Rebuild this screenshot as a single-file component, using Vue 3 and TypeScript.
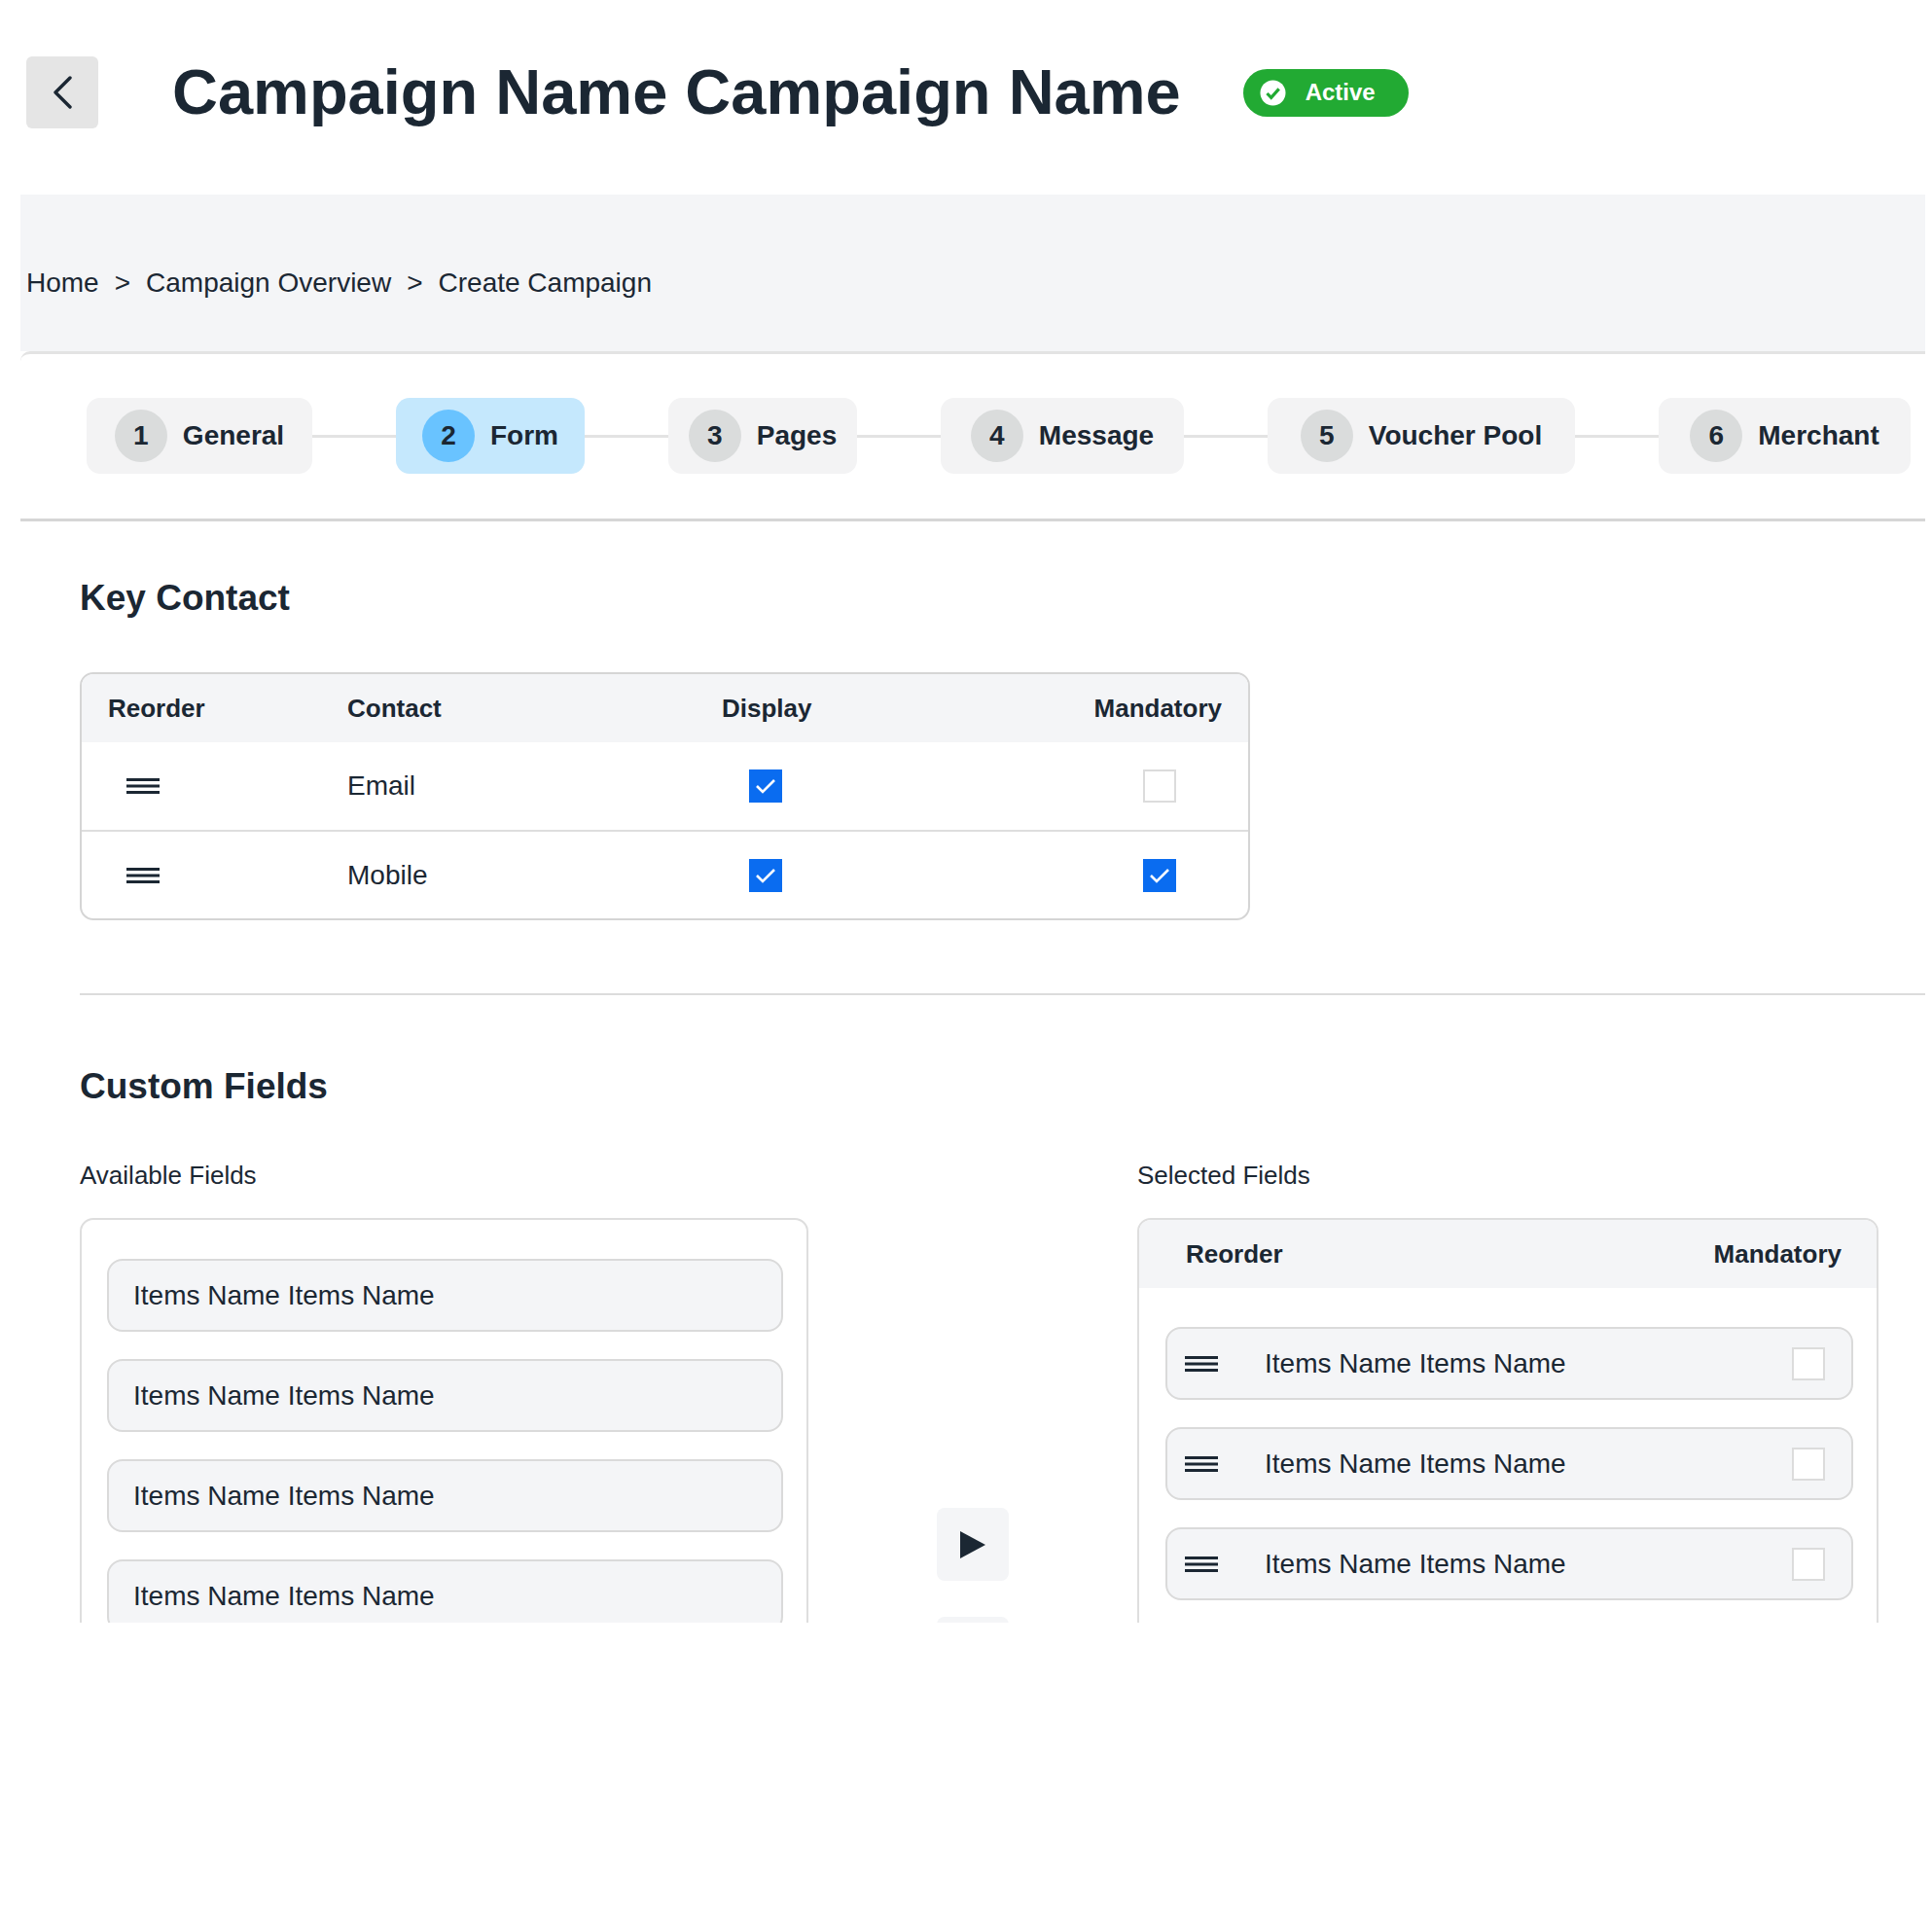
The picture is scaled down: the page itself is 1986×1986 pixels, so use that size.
<template>
  <div class="page">
    <header class="head">
      <button class="back" type="button" aria-label="Back">
        <svg width="20" height="34" viewBox="0 0 20 34" fill="none">
          <path d="M18 2 3 17l15 15" stroke="#1b2733" stroke-width="3.4" stroke-linecap="round" stroke-linejoin="round" />
        </svg>
      </button>
      <h1 class="title">Campaign Name Campaign Name</h1>
      <span class="badge">
        <svg width="27" height="27" viewBox="0 0 27 27">
          <circle cx="13.5" cy="13.5" r="13" fill="#fff" />
          <path d="M7.5 14l4.2 4.4 8-9" fill="none" stroke="#22aa33" stroke-width="3.2" />
        </svg>
        Active
      </span>
    </header>

    <nav class="crumbs">
      <template v-for="(c, i) in crumbs" :key="c">
        <span v-if="i > 0">&gt;</span>
        <span>{{ c }}</span>
      </template>
    </nav>

    <div class="stepper">
      <template v-for="(s, i) in steps" :key="s.label">
        <span v-if="i > 0" class="link"></span>
        <div class="step" :class="{ on: s.label === 'Form' }" :style="{ width: s.width + 'px' }">
          <span class="num">{{ i + 1 }}</span>
          <span>{{ s.label }}</span>
        </div>
      </template>
    </div>

    <main class="content">
      <h2>Key Contact</h2>
      <div class="table">
        <div class="row thead">
          <span>Reorder</span>
          <span>Contact</span>
          <span>Display</span>
          <span class="right">Mandatory</span>
        </div>
        <div v-for="c in contacts" :key="c.name" class="row tbody">
          <svg class="grip" width="34" height="16" viewBox="0 0 34 16"><path d="M0 1.5h34M0 8h34M0 14.5h34" stroke="#1b2733" stroke-width="3" /></svg>
          <span>{{ c.name }}</span>
          <span class="box display" :class="{ checked: c.display }">
            <svg v-if="c.display" width="22" height="16" viewBox="0 0 22 16"><path d="M2 8l6 6L20 2" fill="none" stroke="#fff" stroke-width="2.6" /></svg>
          </span>
          <div class="right">
            <span class="box mand" :class="{ checked: c.mandatory }">
              <svg v-if="c.mandatory" width="22" height="16" viewBox="0 0 22 16"><path d="M2 8l6 6L20 2" fill="none" stroke="#fff" stroke-width="2.6" /></svg>
            </span>
          </div>
        </div>
      </div>

      <hr class="rule" />

      <h2 class="second">Custom Fields</h2>
      <div class="fields">
        <section class="col left">
          <div class="label">Available Fields</div>
          <div class="panel avail">
            <div v-for="n in 4" :key="n" class="item">Items Name Items Name</div>
          </div>
        </section>

        <div class="moves">
          <button class="move" type="button" aria-label="Add">
            <svg width="28" height="28" viewBox="0 0 28 28"><path d="M1 0l26 14L1 28z" fill="#1b2733" /></svg>
          </button>
          <button class="move" type="button" aria-label="Remove">
            <svg width="28" height="28" viewBox="0 0 28 28"><path d="M27 0L1 14l26 14z" fill="#1b2733" /></svg>
          </button>
        </div>

        <section class="col sel">
          <div class="label">Selected Fields</div>
          <div class="panel">
            <div class="sel-head">
              <span>Reorder</span>
              <span>Mandatory</span>
            </div>
            <div class="sel-list">
              <div v-for="n in 3" :key="n" class="item with-grip">
                <svg class="item-grip" width="34" height="16" viewBox="0 0 34 16"><path d="M0 1.5h34M0 8h34M0 14.5h34" stroke="#1b2733" stroke-width="3" /></svg>
                <span class="grow">Items Name Items Name</span>
                <span class="box"></span>
              </div>
            </div>
          </div>
        </section>
      </div>
    </main>
  </div>
</template>

<script setup lang="ts">
const crumbs: string[] = ['Home', 'Campaign Overview', 'Create Campaign'];

const steps = [
  { label: 'General', width: 232 },
  { label: 'Form', width: 194 },
  { label: 'Pages', width: 194 },
  { label: 'Message', width: 250 },
  { label: 'Voucher Pool', width: 316 },
  { label: 'Merchant', width: 259 },
];

const contacts = [
  { name: 'Email', display: true, mandatory: false },
  { name: 'Mobile', display: true, mandatory: true },
];
</script>

<style>
body {
  background: #fff;
}
</style>

<style scoped>
.page {
  height: 1668px;
  overflow: hidden;
  background: #fff;
  color: #1b2733;
  font-family: "Liberation Sans", Arial, sans-serif;
  font-size: 28px;
}

.head {
  display: flex;
  align-items: center;
  padding: 58px 0 0 27px;
}

.back {
  display: flex;
  align-items: center;
  justify-content: center;
  width: 74px;
  height: 74px;
  padding: 0;
  border: 0;
  border-radius: 6px;
  background: #e5e5e5;
}

.title {
  margin: 0 0 0 76px;
  font-size: 65px;
  line-height: 74px;
  font-weight: 700;
}

.badge {
  display: flex;
  align-items: center;
  gap: 20px;
  width: 170px;
  height: 49px;
  box-sizing: border-box;
  margin-left: 64px;
  padding-left: 17px;
  border-radius: 25px;
  background: #22aa33;
  color: #fff;
  font-size: 24px;
  font-weight: 700;
}

.crumbs {
  display: flex;
  align-items: center;
  gap: 16px;
  height: 161px;
  box-sizing: border-box;
  margin: 68px 7px 0 21px;
  padding: 20px 0 0 6px;
  background: #f4f5f7;
  border-bottom: 0;
}

.stepper {
  display: flex;
  align-items: center;
  margin: 0 7px 0 21px;
  padding: 45px 0 46px 68px;
  border-top: 3px solid #e3e3e3;
  border-top-left-radius: 10px;
  border-bottom: 3px solid #d6d6d6;
}

.step {
  display: flex;
  align-items: center;
  justify-content: center;
  gap: 16px;
  flex: none;
  height: 78px;
  border-radius: 14px;
  background: #f3f3f4;
  font-weight: 700;
}

.step.on {
  background: #c5e8fd;
}

.num {
  display: flex;
  align-items: center;
  justify-content: center;
  width: 54px;
  height: 54px;
  border-radius: 50%;
  background: #dadcdc;
}

.on .num {
  background: #69c3ff;
}

.link {
  flex: none;
  width: 86px;
  height: 3px;
  background: #e3e3e3;
}

.content {
  padding: 57px 7px 0 82px;
}

h2 {
  margin: 0;
  font-size: 37px;
  line-height: 44px;
  font-weight: 700;
}

.table {
  width: 1203px;
  box-sizing: border-box;
  margin-top: 54px;
  overflow: hidden;
  border: 2px solid #d5d5d5;
  border-radius: 14px;
}

.row {
  display: grid;
  grid-template-columns: 246px 385px 1fr;
  align-items: center;
  padding: 0 27px;
}

.thead {
  grid-template-columns: 246px 385px 1fr 1fr;
  height: 70px;
  background: #f4f5f7;
  font-size: 26px;
  font-weight: 700;
}

.tbody {
  grid-template-columns: 246px 385px 1fr 1fr;
  height: 90px;
}

.tbody + .tbody {
  height: 89px;
  border-top: 2px solid #dedede;
}

.right {
  display: flex;
  justify-content: flex-end;
  text-align: right;
}

.thead .right {
  display: block;
}

.grip {
  margin-left: 19px;
}

.box {
  display: flex;
  align-items: center;
  justify-content: center;
  flex: none;
  width: 34px;
  height: 34px;
  box-sizing: border-box;
  border: 2px solid #dcdcdc;
  background: #fff;
}

.box.checked {
  border-color: #0a6cf0;
  background: #0a6cf0;
}

.display {
  margin-left: 28px;
}

.mand {
  margin-right: 47px;
}

.rule {
  height: 2px;
  margin: 75px 0 0;
  border: 0;
  background: #dcdcdc;
}

.second {
  margin-top: 72px;
}

.fields {
  display: flex;
  margin-top: 54px;
}

.col.left {
  width: 749px;
  flex: none;
}

.col.sel {
  width: 762px;
  flex: none;
  margin-left: 132px;
}

.label {
  height: 30px;
  margin-bottom: 29px;
  font-size: 26px;
  line-height: 30px;
}

.panel {
  box-sizing: border-box;
  overflow: hidden;
  border: 2px solid #dedede;
  border-radius: 14px;
}

.avail {
  display: flex;
  flex-direction: column;
  gap: 28px;
  padding: 40px 24px 40px 26px;
}

.item {
  display: flex;
  align-items: center;
  height: 75px;
  box-sizing: border-box;
  padding-left: 25px;
  border: 2px solid #dadada;
  border-radius: 16px;
  background: #f4f5f7;
}

.moves {
  display: flex;
  flex-direction: column;
  gap: 37px;
  flex: none;
  width: 74px;
  margin: 357px 0 0 132px;
}

.move {
  display: flex;
  align-items: center;
  justify-content: center;
  width: 74px;
  height: 75px;
  padding: 0;
  border: 0;
  border-radius: 8px;
  background: #f4f5f7;
}

.sel-head {
  display: flex;
  align-items: center;
  justify-content: space-between;
  height: 70px;
  padding: 0 36px 0 48px;
  background: #f4f5f7;
  font-size: 26px;
  font-weight: 700;
}

.sel-list {
  display: flex;
  flex-direction: column;
  gap: 28px;
  padding: 40px 24px 40px 27px;
}

.with-grip {
  padding: 0 27px 0 18px;
}

.item-grip {
  flex: none;
  margin-right: 48px;
}

.grow {
  flex: 1;
}
</style>
